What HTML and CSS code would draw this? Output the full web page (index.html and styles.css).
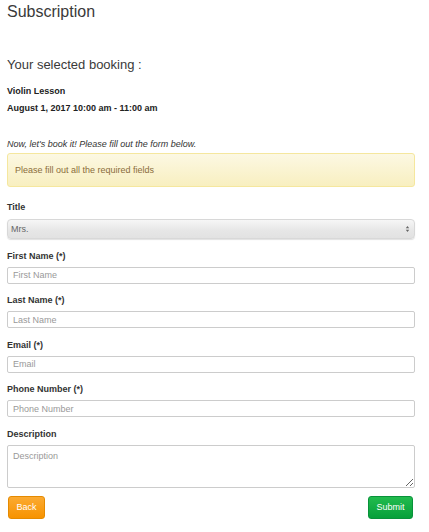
FILE: index.html
```html
<!DOCTYPE html>
<html>
<head>
<meta charset="utf-8">
<link rel="stylesheet" href="styles.css">
</head>
<body>
<div class="page">
  <h1 class="title">Subscription</h1>
  <h2 class="subtitle">Your selected booking :</h2>
  <div class="booking-name">Violin Lesson</div>
  <div class="booking-date">August 1, 2017 10:00 am - 11:00 am</div>
  <p class="intro">Now, let's book it! Please fill out the form below.</p>
  <div class="alert">Please fill out all the required fields</div>
  <form class="form">
    <div class="group group-select">
      <label class="label">Title</label>
      <div class="select">
        <span class="select-text">Mrs.</span>
        <svg class="select-arrows" width="5" height="8" viewBox="0 0 5 8"><path d="M2.5 1 L4.2 3.3 H0.8 Z M2.5 7 L4.2 4.7 H0.8 Z" fill="#666"/></svg>
      </div>
    </div>
    <div class="group">
      <label class="label">First Name (*)</label>
      <input class="input" type="text" placeholder="First Name">
    </div>
    <div class="group">
      <label class="label">Last Name (*)</label>
      <input class="input" type="text" placeholder="Last Name">
    </div>
    <div class="group">
      <label class="label">Email (*)</label>
      <input class="input" type="text" placeholder="Email">
    </div>
    <div class="group">
      <label class="label">Phone Number (*)</label>
      <input class="input" type="text" placeholder="Phone Number">
    </div>
    <div class="group group-last">
      <label class="label">Description</label>
      <textarea class="textarea" placeholder="Description"></textarea>
    </div>
    <div class="actions">
      <button type="button" class="btn btn-back">Back</button>
      <button type="button" class="btn btn-submit">Submit</button>
    </div>
  </form>
</div>
</body>
</html>
```
FILE: styles.css
```css
html, body {
  margin: 0;
  padding: 0;
  background: #fff;
}
body {
  font-family: "Liberation Sans", Arial, Helvetica, sans-serif;
  color: #333;
}
.page {
  width: 408px;
  padding: 2px 14px 0 7px;
}
.title {
  margin: 0;
  font-size: 16px;
  line-height: 20px;
  font-weight: normal;
  color: #3a3a3a;
}
.subtitle {
  margin: 34.5px 0 0;
  font-size: 13px;
  line-height: 16px;
  font-weight: normal;
  color: #3a3a3a;
}
.booking-name {
  margin-top: 12px;
  font-size: 9px;
  line-height: 12px;
  font-weight: bold;
  color: #222;
}
.booking-date {
  margin-top: 5px;
  font-size: 9px;
  line-height: 12px;
  font-weight: bold;
  color: #222;
}
.intro {
  margin: 24.5px 0 0;
  font-size: 9px;
  line-height: 12px;
  font-style: italic;
  color: #333;
}
.alert {
  margin-top: 3px;
  border: 1px solid #f5e79e;
  border-radius: 3px;
  background: linear-gradient(to bottom, #fcf8e3 0%, #f8efc0 100%);
  color: #8a6d3b;
  font-size: 9px;
  line-height: 12px;
  padding: 10px 7px;
}
.form {
  margin: 13.5px 0 0;
}
.group {
  display: flex;
  flex-direction: column;
  margin-bottom: 10.5px;
}
.group-select {
  margin-bottom: 11px;
}
.group-last {
  margin-bottom: 8px;
}
.label {
  display: block;
  font-size: 9px;
  line-height: 12px;
  font-weight: bold;
  color: #333;
  margin-bottom: 5px;
}
.group-select .label {
  margin-bottom: 6px;
}
.select {
  box-sizing: border-box;
  height: 20px;
  border: 1px solid #d8d8d8;
  border-radius: 4px;
  background: linear-gradient(to bottom, #f6f6f6 0%, #e6e6e6 60%, #e2e2e2 100%);
  box-shadow: 0 1px 1px rgba(0,0,0,0.12);
  display: flex;
  align-items: center;
  justify-content: space-between;
  padding: 0 4px 0 3px;
}
.select-text {
  font-size: 9px;
  color: #666;
}
.select-arrows {
  display: block;
}
.input {
  box-sizing: border-box;
  width: 100%;
  height: 17px;
  margin: 0;
  border: 1px solid #ccc;
  border-radius: 2px;
  padding: 0 5px;
  font-family: "Liberation Sans", Arial, sans-serif;
  font-size: 9px;
  color: #555;
  background: #fff;
  outline: none;
}
.input::placeholder,
.textarea::placeholder {
  color: #999;
  opacity: 1;
}
.textarea {
  box-sizing: border-box;
  width: 100%;
  height: 43px;
  margin: 0;
  border: 1px solid #ccc;
  border-radius: 2px;
  padding: 4px 5px;
  font-family: "Liberation Sans", Arial, sans-serif;
  font-size: 9px;
  line-height: 12px;
  color: #555;
  background: #fff;
  outline: none;
  resize: vertical;
  display: block;
}
.actions {
  display: flex;
  justify-content: space-between;
  padding: 0 2px 0 1px;
}
.btn {
  box-sizing: border-box;
  height: 23px;
  border-radius: 3px;
  font-family: "Liberation Sans", Arial, sans-serif;
  font-size: 9px;
  color: #fff;
  padding: 0;
  cursor: pointer;
}
.btn-back {
  width: 37px;
  border: 1px solid #e58a00;
  background: linear-gradient(to bottom, #fbaa32 0%, #f79300 100%);
}
.btn-submit {
  width: 45px;
  border: 1px solid #08923a;
  background: linear-gradient(to bottom, #22bb4e 0%, #06a03a 100%);
}
```
